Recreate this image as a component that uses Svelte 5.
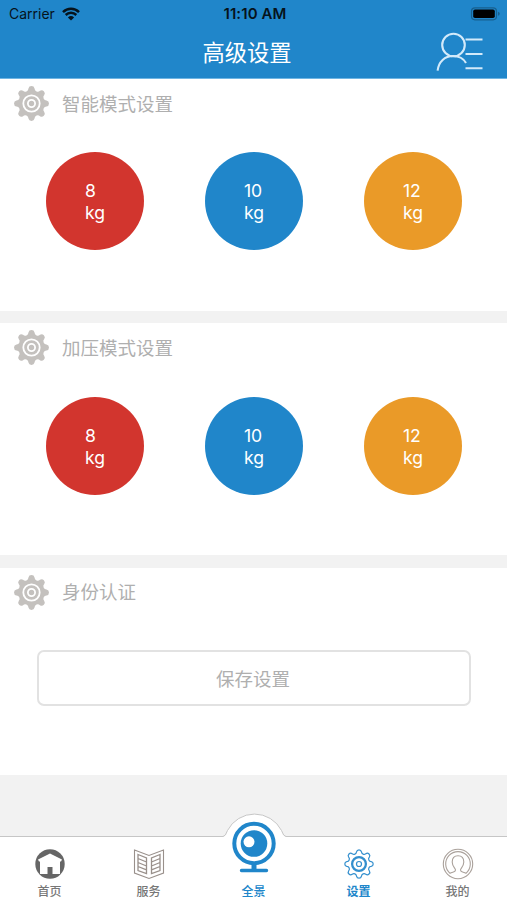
<script>
  const modes = [
    { title: '智能模式设置', weights: [8, 10, 12] },
    { title: '加压模式设置', weights: [8, 10, 12] }
  ];
  const colors = ['red', 'blue', 'orange'];

  const tabs = [
    { id: 'home', label: '首页' },
    { id: 'service', label: '服务' },
    { id: 'camera', label: '全景' },
    { id: 'settings', label: '设置' },
    { id: 'mine', label: '我的' }
  ];

  let active = $state('settings');

  // gear outline with eight rounded teeth, centered on 18,18
  function gearPath(r, tip, valley) {
    const at = (a) => `${(18 + r * Math.cos(a)).toFixed(2)} ${(18 + r * Math.sin(a)).toFixed(2)}`;
    let d = '';
    for (let i = 0; i < 8; i++) {
      const a = (i * Math.PI) / 4;
      d += `${i ? `A${valley} ${valley} 0 0 0 ` : 'M'}${at(a - 0.2)}`;
      d += `A${tip} ${tip} 0 0 1 ${at(a + 0.2)}`;
    }
    return d + `A${valley} ${valley} 0 0 0 ${at(-0.2)}Z`;
  }

  const gear = gearPath(15.3, 3.1, 3.2);
</script>

<style>
  :global(body) {
    margin: 0;
  }

  .screen {
    display: flex;
    flex-direction: column;
    width: 507px;
    height: 900px;
    overflow: hidden;
    background: #f2f2f2;
    font-family: Inter, "Noto Sans CJK SC", sans-serif;
    color: #afafaf;
  }

  svg {
    display: block;
    fill: none;
  }

  header {
    box-sizing: border-box;
    height: 79px;
    flex: none;
    background: #2086ca;
    border-bottom: 1px solid #6fb5e3;
  }

  .status {
    display: grid;
    grid-template-columns: 1fr auto 1fr;
    align-items: center;
    height: 27px;
    padding: 0 6px 0 9px;
    color: #06131c;
    font-size: 14px;
  }

  .carrier {
    display: flex;
    align-items: center;
    gap: 7px;
  }

  .time {
    font-weight: 600;
    font-size: 15px;
    letter-spacing: 0.1px;
  }

  .battery {
    justify-self: end;
  }

  .nav {
    display: grid;
    grid-template-columns: 1fr auto 1fr;
    align-items: center;
    height: 51px;
    padding: 0 24px 0 11px;
  }

  h1 {
    grid-column: 2;
    margin: 0;
    color: #fff;
    font-size: 22.3px;
    font-weight: 400;
    line-height: 30px;
  }

  .profile {
    justify-self: end;
    padding: 0 0 2px;
    border: 0;
    background: none;
  }

  section {
    box-sizing: border-box;
    flex: none;
    height: 232px;
    margin-bottom: 12.4px;
    background: #fff;
  }

  .auth {
    height: 207px;
    margin: 0;
  }

  .heading {
    display: flex;
    align-items: center;
    gap: 12px;
    height: 49px;
    padding-left: 13px;
  }

  h2 {
    margin: 0;
    font-size: 18.5px;
    font-weight: 400;
    line-height: 26px;
  }

  .weights {
    display: flex;
    justify-content: space-between;
    padding: 24.4px 45px 0 46px;
  }

  .weight {
    box-sizing: border-box;
    display: flex;
    align-items: center;
    justify-content: center;
    width: 98px;
    height: 98px;
    padding-top: 2px;
    border-radius: 50%;
    color: #fff;
    font-size: 17.6px;
    line-height: 22px;
  }

  .red {
    background: #d2352e;
  }

  .blue {
    background: #2086ca;
  }

  .orange {
    background: #ea9a28;
  }

  .save {
    display: block;
    width: 434px;
    height: 56px;
    margin: 33px 0 0 37px;
    padding: 0 2px 0 0;
    border: 2px solid #e2e2e2;
    border-radius: 7px;
    background: #fff;
    color: #afafaf;
    font: inherit;
    font-size: 18.5px;
  }

  .tabbar {
    position: relative;
    box-sizing: border-box;
    display: grid;
    grid-template-columns: 99px 99px 111px 99px 99px;
    grid-template-rows: 63px;
    flex: none;
    height: 64px;
    margin-top: auto;
    border-top: 1px solid #c6c6c6;
    background: #fff;
  }

  .bump {
    position: absolute;
    top: -25px;
    left: 220px;
  }

  .tab {
    position: relative;
    display: flex;
    flex-direction: column;
    align-items: center;
    justify-content: flex-end;
    gap: 3px;
    padding: 0;
    border: 0;
    background: none;
    color: #777;
    font: inherit;
    font-size: 12px;
    font-weight: 500;
    line-height: 17px;
  }

  /* the camera icon rises above the bar */
  .camera {
    align-self: end;
    gap: 10px;
  }

  .camera,
  .active {
    color: #2086ca;
  }

  .active {
    font-weight: 700;
  }
</style>

{#snippet heading(title)}
  <div class="heading">
    <svg width="37" height="37" viewBox="-.5 -.5 37 37">
      <path d={gear} fill="#c4c1be" />
      <circle cx="18" cy="18" r="8.2" stroke="#fff" stroke-width="1.8" />
      <circle cx="18" cy="18" r="3.6" stroke="#fff" stroke-width="1.8" />
    </svg>
    <h2>{title}</h2>
  </div>
{/snippet}

<div class="screen">
  <header>
    <div class="status">
      <div class="carrier">
        <span>Carrier</span>
        <svg width="18" height="14" viewBox="0 0 18 14">
          <path d="M1 5.1a11.5 11.5 0 0 1 16 0M3.7 8a7.6 7.6 0 0 1 10.6 0" stroke="#06131c" stroke-width="2.5" />
          <path d="M9 13.6 5.9 10.4a4.5 4.5 0 0 1 6.2 0z" fill="#06131c" />
        </svg>
      </div>
      <span class="time">11:10 AM</span>
      <svg class="battery" width="31" height="14" viewBox="0 0 31 14">
        <rect x="1.5" y=".8" width="25" height="12" rx="3.5" stroke="#17608f" stroke-width="1.2" />
        <rect x="3.2" y="2.5" width="21.6" height="8.6" rx="1.8" fill="#000" />
        <path d="M28 4.8v4q1.8-.6 1.8-2t-1.8-2z" fill="#17608f" />
      </svg>
    </div>
    <div class="nav">
      <h1>高级设置</h1>
      <button class="profile" aria-label="profile">
        <svg width="48" height="40" viewBox="0 0 48 40" stroke="#d3eafa" stroke-width="2.1">
          <circle cx="18.5" cy="13" r="11.3" />
          <path d="M2.6 38.7C3.5 29.5 10 24 18 24c6 0 10.5 2.5 13 7" />
          <path d="M30.5 7.5h17M30.5 22h17M30.5 36.3h17" />
        </svg>
      </button>
    </div>
  </header>

  {#each modes as mode}
    <section>
      {@render heading(mode.title)}
      <div class="weights">
        {#each mode.weights as weight, i}
          <div class="weight {colors[i]}">
            <span>{weight}<br />kg</span>
          </div>
        {/each}
      </div>
    </section>
  {/each}

  <section class="auth">
    {@render heading('身份认证')}
    <button class="save">保存设置</button>
  </section>

  <nav class="tabbar">
    <svg class="bump" width="70" height="40" viewBox="0 0 70 40">
      <path d="M0 24.5H3Q5.5 24.5 7.5 18.5A30.4 30.4 0 0 1 61.5 18.5Q63.5 24.5 66 24.5H70V40H0z" fill="#fff" />
      <path d="M0 24.5H3Q5.5 24.5 7.5 18.5A30.4 30.4 0 0 1 61.5 18.5Q63.5 24.5 66 24.5H70" stroke="#c6c6c6" />
    </svg>
    {#each tabs as tab}
      <button class="tab {tab.id}" class:active={active === tab.id} onclick={() => (active = tab.id)}>
        {#if tab.id === 'home'}
          <svg width="30" height="32" viewBox="0 0 30 32">
            <circle cx="15" cy="16" r="14.7" fill="#666" />
            <path d="M15 5.5 27 11.500l-1 2h-1V26h-7.500v-7h-5v7H5V13.500H4l-1-2z" fill="#fff" />
          </svg>
        {:else if tab.id === 'service'}
          <svg width="32" height="32" viewBox="0 0 32 32" stroke="#99908b" stroke-width="1.1">
            <path d="M1.5 2 16 7.5 30.5 2v23L16 30.5 1.5 25z" />
            <path d="M5 6.5 13.5 10v15.5L5 22.5zM27 6.5 18.5 10v15.5l8.5-3zM5 10.5l8.5 3.5M5 14.5 13.5 18M5 18.5l8.5 3.3M27 10.5 18.5 14M27 14.5 18.5 18M27 18.5l-8.5 3.3" stroke-width="1.3" />
          </svg>
        {:else if tab.id === 'camera'}
          <svg width="44" height="52" viewBox="0 0 44 52">
            <circle cx="22" cy="22.5" r="19.7" stroke="#2086ca" stroke-width="4" />
            <circle cx="22" cy="22.5" r="13.3" fill="#2086ca" />
            <circle cx="17" cy="20.8" r="5.5" fill="#fff" />
            <path d="M19.5 43.5h5v4.3h10a1.6 1.6 0 0 1 0 3.4h-25a1.6 1.6 0 0 1 0-3.4h10z" fill="#2086ca" />
          </svg>
        {:else if tab.id === 'settings'}
          <svg width="30" height="32" viewBox="-.5 -1.7 37 39.4" stroke="#338fce">
            <path d={gear} stroke-width="1.5" />
            <circle cx="18" cy="18" r="8.5" stroke-width="2.8" />
            <circle cx="18" cy="18" r="3.1" stroke-width="1.5" />
          </svg>
        {:else}
          <svg width="32" height="32" viewBox="0 0 32 32" stroke="#aaa19b" stroke-width="1.1">
            <circle cx="16" cy="16" r="14.7" />
            <path d="M8 25.3A12.3 12.3 0 1 1 24 25.3M8 25.3C10.5 23.8 13.5 24.5 13.5 22c0-1.7-3.3-3.5-3.3-8 0-4 2.3-6.3 5.8-6.3s5.8 2.3 5.8 6.3c0 4.5-3.3 6.3-3.3 8 0 2.5 3 1.8 5.5 3.3" />
          </svg>
        {/if}
        <span>{tab.label}</span>
      </button>
    {/each}
  </nav>
</div>
